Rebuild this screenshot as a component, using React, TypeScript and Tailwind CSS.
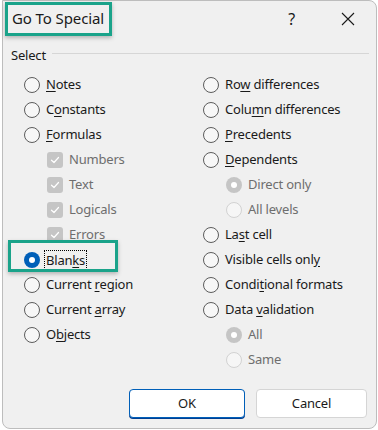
import React from 'react';

type Item = {
  label: string;
  key?: number; // index of mnemonic letter
  kind: 'radio' | 'check' | 'subradio';
  checked?: boolean;
  disabled?: boolean;
  focus?: boolean;
};

const left: Item[] = [
  { label: 'Notes', key: 0, kind: 'radio' },
  { label: 'Constants', key: 1, kind: 'radio' },
  { label: 'Formulas', key: 0, kind: 'radio' },
  { label: 'Numbers', kind: 'check', checked: true, disabled: true },
  { label: 'Text', kind: 'check', checked: true, disabled: true },
  { label: 'Logicals', kind: 'check', checked: true, disabled: true },
  { label: 'Errors', kind: 'check', checked: true, disabled: true },
  { label: 'Blanks', key: 4, kind: 'radio', checked: true, focus: true },
  { label: 'Current region', key: 8, kind: 'radio' },
  { label: 'Current array', key: 8, kind: 'radio' },
  { label: 'Objects', key: 1, kind: 'radio' },
];

const right: Item[] = [
  { label: 'Row differences', key: 2, kind: 'radio' },
  { label: 'Column differences', key: 4, kind: 'radio' },
  { label: 'Precedents', key: 0, kind: 'radio' },
  { label: 'Dependents', key: 0, kind: 'radio' },
  { label: 'Direct only', kind: 'subradio', checked: true, disabled: true },
  { label: 'All levels', kind: 'subradio', disabled: true },
  { label: 'Last cell', key: 2, kind: 'radio' },
  { label: 'Visible cells only', key: 17, kind: 'radio' },
  { label: 'Conditional formats', key: 5, kind: 'radio' },
  { label: 'Data validation', key: 5, kind: 'radio' },
  { label: 'All', kind: 'subradio', checked: true, disabled: true },
  { label: 'Same', kind: 'subradio', disabled: true },
];

function Label({ item }: { item: Item }) {
  const { label, key } = item;
  const text =
    key === undefined ? (
      label
    ) : (
      <>
        {label.slice(0, key)}
        <u className="underline-offset-[2px]">{label[key]}</u>
        {label.slice(key + 1)}
      </>
    );
  return (
    <span
      className={
        (item.disabled ? 'text-[#6e6e6e] ' : 'text-[#1a1a1a] ') +
        (item.focus ? 'border border-dotted border-black px-[1px] leading-[18px]' : 'border border-transparent px-[1px]')
      }
    >
      {text}
    </span>
  );
}

function Radio({ checked, disabled }: { checked?: boolean; disabled?: boolean }) {
  if (checked && !disabled)
    return (
      <span className="flex h-[16px] w-[16px] items-center justify-center rounded-full bg-[#005fb8]">
        <span className="h-[6px] w-[6px] rounded-full bg-white" />
      </span>
    );
  if (checked)
    return (
      <span className="flex h-[16px] w-[16px] items-center justify-center rounded-full bg-[#c5c5c5]">
        <span className="h-[6px] w-[6px] rounded-full bg-white" />
      </span>
    );
  return (
    <span
      className={
        'h-[16px] w-[16px] rounded-full border ' +
        (disabled ? 'border-[#d2d2d2] bg-[#f6f6f6]' : 'border-[#5c5c5c] bg-[#f7f7f7]')
      }
    />
  );
}

function Check() {
  return (
    <span className="flex h-[16px] w-[16px] items-center justify-center rounded-[3px] bg-[#c5c5c5]">
      <svg width="10" height="10" viewBox="0 0 10 10" fill="none">
        <path d="M1.5 5.2 L4 7.5 L8.5 2.5" stroke="white" strokeWidth="1.2" strokeLinecap="round" strokeLinejoin="round" />
      </svg>
    </span>
  );
}

function Row({ item }: { item: Item }) {
  const indent = item.kind === 'radio' ? '' : 'pl-[23px]';
  return (
    <div className={'relative flex h-[25px] items-center gap-[4px] ' + indent}>
      {item.focus && (
        <span className="absolute left-[-16px] top-[-7px] h-[32px] w-[110px] border-[3px] border-[#1aa38a] shadow-[0_2px_4px_rgba(0,0,0,0.25)]" />
      )}
      {item.kind === 'check' ? <Check /> : <Radio checked={item.checked} disabled={item.disabled} />}
      <Label item={item} />
    </div>
  );
}

export default function App() {
  return (
    <div className="h-[430px] w-[378px] bg-white pl-[2px]" style={{ fontFamily: '"Noto Sans", sans-serif' }}>
      <div className="flex h-[429px] w-[375px] flex-col rounded-b-lg rounded-tr-lg border border-[#bdbdbd] bg-[#f0f0f0] text-[13px] tracking-[-0.2px]">
        <div className="flex h-[35px] items-center">
          <div className="ml-[2px] flex h-[34px] items-center border-[3px] border-[#1aa38a] pl-[4px] pr-[5px] text-[15px] tracking-[-0.1px] text-[#1a1a1a] shadow-[0_2px_4px_rgba(0,0,0,0.25)]">
            Go To Special
          </div>
          <span className="ml-auto mr-[46px] text-[16px] text-[#1a1a1a]">?</span>
          <svg width="14" height="14" viewBox="0 0 14 14" className="mr-[21px]">
            <path d="M1 1 L13 13 M13 1 L1 13" stroke="#1a1a1a" strokeWidth="1.1" />
          </svg>
        </div>
        <div className="mt-[11px] flex h-[18px] items-center pl-[8px] pr-[7px]">
          <span className="text-[#1a1a1a]">Select</span>
          <span className="ml-[6px] mb-[5px] h-px flex-1 bg-[#d6d6d6]" />
        </div>
        <div className="mt-[7px] grid grid-cols-[179px_1fr] pl-[21px]">
          <div>
            {left.map((it) => (
              <Row key={it.label} item={it} />
            ))}
          </div>
          <div>
            {right.map((it) => (
              <Row key={it.label} item={it} />
            ))}
          </div>
        </div>
        <div className="mt-auto mb-[10px] flex justify-end gap-[11px] pr-[9px]">
          <button className="h-[29px] w-[116px] rounded-[4px] border border-[#005fb8] bg-white text-[#1a1a1a] shadow-[0_1px_0_#003e92]">
            OK
          </button>
          <button className="h-[29px] w-[111px] rounded-[4px] border border-[#d5d5d5] bg-white text-[#1a1a1a]">
            Cancel
          </button>
        </div>
      </div>
    </div>
  );
}
